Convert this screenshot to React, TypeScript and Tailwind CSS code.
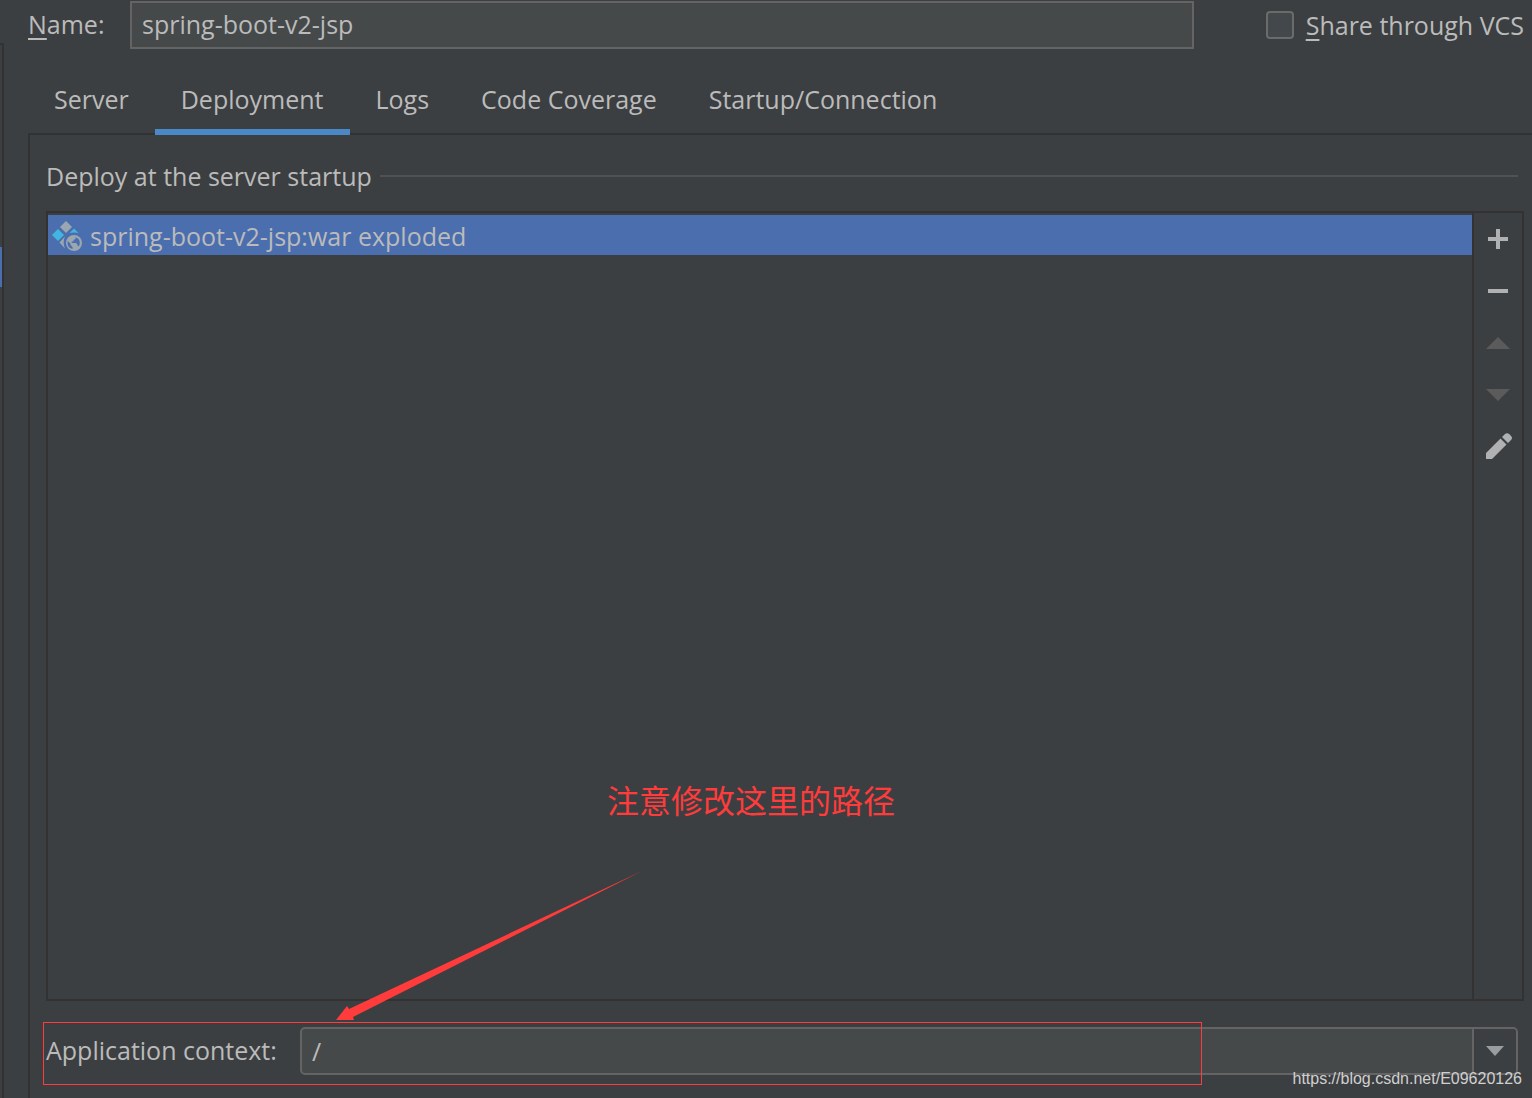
import React from "react";

const tabs = ["Server", "Deployment", "Logs", "Code Coverage", "Startup/Connection"];

function ArtifactIcon() {
  return (
    <svg width="32" height="32" viewBox="0 0 32 32" aria-hidden="true" className="shrink-0">
      <path d="M16 1 22 7 16 13 10 7Z" fill="#9AA7B0" />
      <path d="M8 9 14 15 8 21 2 15Z" fill="#40B6E0" />
      <path d="M24 8.500 28.500 13C25 12.200 22 12.400 19.500 13Z" fill="#40B6E0" />
      <path d="M15 16.500 9.500 22.500 15 28.500C13.200 24.500 13.200 20.500 15 16.500Z" fill="#9AA7B0" />
      <circle cx="24" cy="23" r="8" fill="#9AA7B0" />
      <path
        d="M17.800 21 20.500 23.700V25L22.500 27V29C18.800 28.300 16.800 24.800 17.800 21ZM25.500 17.200 25.500 19 23.500 20V21.500H21.800V23H26L27.500 24.500V26H29C30.500 23.500 30.300 18.500 25.500 17.200Z"
        fill="#4B6EAF"
      />
    </svg>
  );
}

const tools = [
  { label: "Add", color: "#AFB1B3", d: "M12 4H16V12H24V16H16V24H12V16H4V12H12Z" },
  { label: "Remove", color: "#AFB1B3", d: "M4 12H24V16H4Z" },
  { label: "Move up", color: "#5B5B5B", d: "M14 8 26 20H2Z" },
  { label: "Move down", color: "#5B5B5B", d: "M2 8H26L14 20Z" },
  {
    label: "Edit",
    color: "#AFB1B3",
    d: "M2 20V26H8L22.500 11.500 16.500 5.500ZM18 4 24 10 27 7Q29 5 27 3L25.500 1.200Q23 -0.800 21 1Z",
  },
];

export default function App() {
  return (
    <div className="flex min-h-screen overflow-hidden bg-[#3C3F41] font-['Open_Sans','Noto_Sans_CJK_SC',sans-serif] text-[25px] leading-8 text-[#BBBBBB]">
      <aside className="flex w-7 shrink-0 flex-col pt-[43px]">
        <div className="w-1 flex-1 border-t-2 border-r-2 border-[#323232] pt-[202px]">
          <div className="h-10 w-[2px] bg-[#4B6EAF]" />
        </div>
      </aside>

      <main className="flex min-w-0 flex-1 flex-col">
        <div className="flex items-center pt-px pr-2">
          <label htmlFor="name" className="w-[102px] shrink-0 pb-[2px] whitespace-nowrap">
            <span className="underline decoration-2 underline-offset-4">N</span>ame:
          </label>
          <input
            id="name"
            defaultValue="spring-boot-v2-jsp"
            className="h-12 min-w-0 flex-1 border-2 border-[#646464] bg-[#45494A] px-[10px] pb-[2px] outline-none"
          />
          <label className="ml-[72px] flex shrink-0 items-center gap-3 whitespace-nowrap">
            <input
              type="checkbox"
              className="size-7 appearance-none rounded-[4px] border-2 border-[#6B6B6B] bg-[#43494A] checked:bg-[#4A88C7]"
            />
            <span>
              <span className="underline decoration-2 underline-offset-4">S</span>hare through VCS
            </span>
          </label>
        </div>

        <div role="tablist" className="relative z-10 mt-4 -mb-[2px] flex">
          {tabs.map((tab) => (
            <button
              key={tab}
              role="tab"
              aria-selected={tab === "Deployment"}
              className="h-[70px] border-b-6 border-transparent px-[26px] pt-1 whitespace-nowrap aria-selected:border-[#4A88C7]"
            >
              {tab}
            </button>
          ))}
        </div>

        <section className="flex flex-1 flex-col border-t-2 border-l-2 border-[#323232] pr-2 pb-[23px] pl-4">
          <div className="mt-[25px] mr-[6px] flex items-center gap-2">
            <h2 className="whitespace-nowrap">Deploy at the server startup</h2>
            <div className="h-[2px] flex-1 bg-[#515151]" />
          </div>

          <div className="mt-[19px] flex min-h-[400px] flex-1 border-2 border-[#323232]">
            <ul className="min-w-0 flex-1 pt-[2px]">
              <li className="flex h-10 items-center gap-2 bg-[#4B6EAF] pt-[2px] pl-[2px] whitespace-nowrap">
                <ArtifactIcon />
                spring-boot-v2-jsp:war exploded
              </li>
            </ul>
            <div className="flex w-[50px] shrink-0 flex-col border-l-2 border-[#323232]">
              {tools.map((tool) => (
                <button
                  key={tool.label}
                  aria-label={tool.label}
                  className="flex h-[52px] items-center justify-center"
                >
                  <svg width="28" height="28" viewBox="0 0 28 28" overflow="visible" fill={tool.color}>
                    <path d={tool.d} />
                  </svg>
                </button>
              ))}
            </div>
          </div>

          <div className="relative mt-[26px] mr-[6px] flex items-center">
            <label htmlFor="context" className="w-[254px] shrink-0 pb-[2px] whitespace-nowrap">
              Application context:
            </label>
            <div className="flex h-12 min-w-0 flex-1 overflow-hidden rounded-[5px] border-2 border-[#646464] bg-[#45494A]">
              <input
                id="context"
                defaultValue="/"
                className="min-w-0 flex-1 px-[10px] outline-none"
              />
              <button
                aria-label="Show contexts"
                className="flex w-11 items-center justify-center border-l-2 border-[#646464] bg-[#3C3F41]"
              >
                <svg width="18" height="10" viewBox="0 0 18 10" fill="#9A9DA0">
                  <path d="M0 0H18L9 10Z" />
                </svg>
              </button>
            </div>

            <div className="pointer-events-none absolute -top-[5px] right-[316px] -bottom-[10px] -left-[3px] border border-[#FF3B3B]" />
            <svg
              className="pointer-events-none absolute bottom-[54px] left-[290px]"
              width="306"
              height="152"
              viewBox="0 0 306 152"
              fill="#FF3B3B"
              aria-hidden="true"
            >
              <path d="M0 151 11 137 13 140 306 2 17 148 18 151Z" />
            </svg>
            <p className="pointer-events-none absolute bottom-[250px] left-[561px] text-[32px] leading-12 whitespace-nowrap text-[#FF3B3B]">
              注意修改这里的路径
            </p>
            <p className="pointer-events-none absolute -right-1 -bottom-[14px] font-['Liberation_Sans',sans-serif] text-base leading-5 text-[#D0D0D0]">
              https://blog.csdn.net/E09620126
            </p>
          </div>
        </section>
      </main>
    </div>
  );
}
